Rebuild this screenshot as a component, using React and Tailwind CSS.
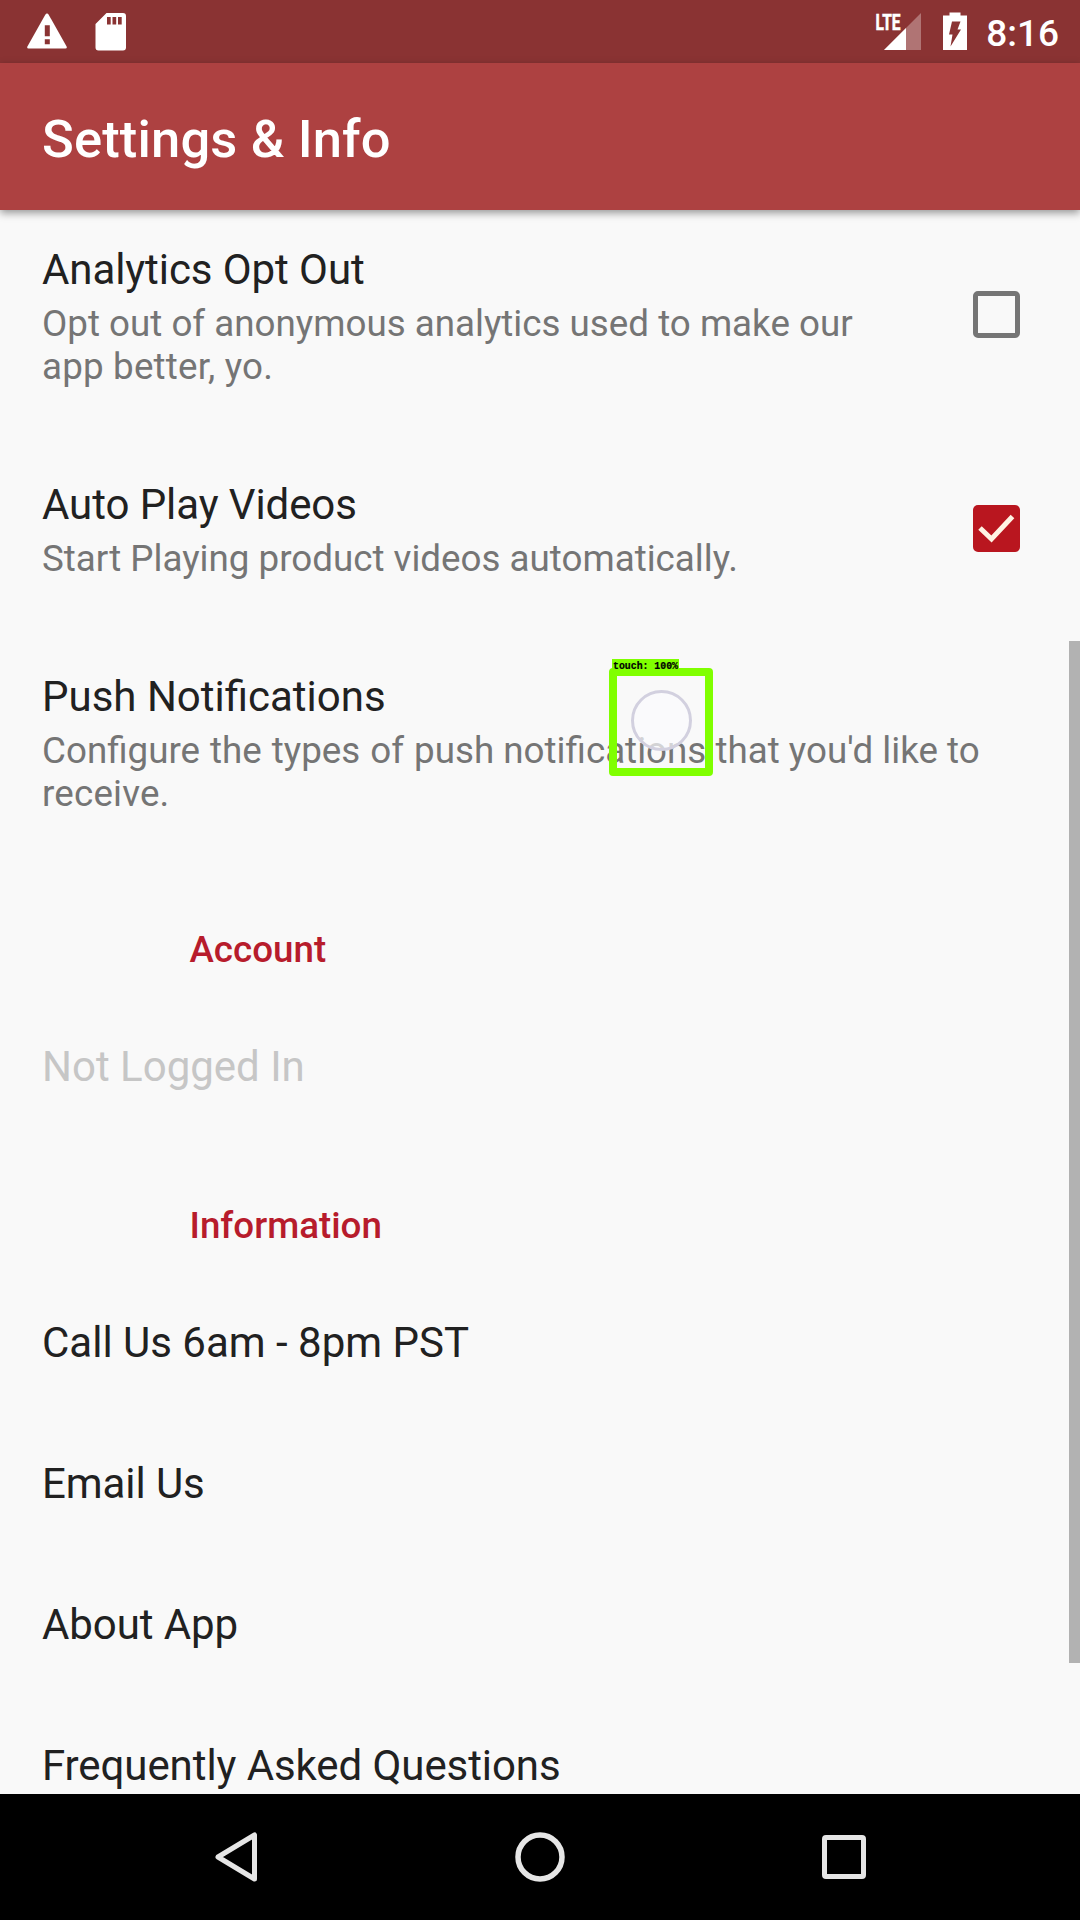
function Row({ title, lines = [], first, muted, tight, children }) {
  return (
    <div className={(first ? "pt-[35px]" : "pt-[46px]") + " flex shrink-0 items-center justify-between pr-[60.5px] pb-[46px] pl-[42px]"}>
      <div>
        <div className={(muted ? "text-[#c6c6c6]" : "text-[#212121]") + (tight ? " tracking-[-0.08px]" : "") + " whitespace-nowrap text-[42px] leading-[49px]"}>{title}</div>
        {lines.length > 0 && (
          <div className="mt-2 text-[36.75px] leading-[43px] text-[#757575]">
            {lines.map((l, i) => (
              <div key={i} className={(i > 0 ? "tracking-[0.18px] " : "") + "whitespace-nowrap"}>{l}</div>
            ))}
          </div>
        )}
      </div>
      {children}
    </div>
  );
}

function Header({ children }) {
  return (
    <div className="flex h-[134.5px] shrink-0 items-end pb-[24.5px] pl-[189.5px] text-[36.75px] leading-[43px] font-medium text-[#b71c2c]">
      {children}
    </div>
  );
}

export default function App() {
  return (
    <div className="relative flex h-[1920px] w-[1080px] flex-col overflow-hidden bg-[#f9f9f9] font-['Roboto',sans-serif]">
      <div className="flex h-[63px] shrink-0 items-center justify-between bg-[#8a3333] pr-[21px] pl-[27px]">
        <div className="flex items-center gap-7">
          <svg className="h-[37px] w-10" viewBox="0 0 40 37">
            <path d="M20 0.5q1 0 1.7 1.2L39.6 33.5q.8 2-1.2 2H1.6q-2 0-1.2-2L18.3 1.7Q19 .5 20 .5z" fill="#fff" />
            <path d="M17.8 12.3h5v11h-5zM17.8 26.300h5v5h-5z" fill="#8a3333" />
          </svg>
          <svg className="h-[39px] w-[31px]" viewBox="0 0 31 39">
            <path d="M11.500 1H28a3 3 0 0 1 3 3v31.500a3 3 0 0 1-3 3H3.500a3 3 0 0 1-3-3V12z" fill="#fff" />
            <path d="M12 5h3.700v7.500H12zM17.500 5h3.700v7.500h-3.700zM23 5h3.700v7.500H23z" fill="#8a3333" />
          </svg>
        </div>
        <div className="flex items-center">
          <svg className="h-10 w-[46px] overflow-visible" viewBox="0 0 46 40">
            <path d="M46 1v37H9z" fill="#b07474" />
            <path d="M31 16v22H9z" fill="#fff" />
            <text x="0.500" y="18" fontFamily="Roboto" fontWeight="700" fontSize="22.500" textLength="25" lengthAdjust="spacingAndGlyphs" fill="#fff" stroke="#fff" strokeWidth="0.600">LTE</text>
          </svg>
          <svg className="ml-[22px] h-10 w-6" viewBox="0 0 24 40">
            <path d="M6.500 0.500h11v3H24V38H0V3.500h6.500z" fill="#fff" />
            <path d="M9 9.500h8.500l-3 8H18L7.500 34.500l2-12H6z" fill="#8a3333" />
          </svg>
          <span className="ml-[19px] pt-[3px] text-[37px] leading-[43px] font-medium text-white">8:16</span>
        </div>
      </div>
      <div className="z-10 flex h-[147px] shrink-0 items-center bg-[#ad4141] pl-[42px] shadow-[0_3px_8px_rgba(0,0,0,0.4)]">
        <h1 className="pt-1 text-[52.5px] leading-[62px] font-medium tracking-[0.15px] text-white">Settings &amp; Info</h1>
      </div>
      <main className="flex min-h-0 flex-1 flex-col overflow-hidden">
        <Row first tight title="Analytics Opt Out" lines={["Opt out of anonymous analytics used to make our", "app better, yo."]}>
          <span className="mb-[5px] size-[47px] rounded-[5px] border-[5px] border-[#757575]" />
        </Row>
        <Row title="Auto Play Videos" tight lines={["Start Playing product videos automatically."]}>
          <span className="mb-1 size-[47px] rounded-[5px] bg-[#b9161f]">
            <svg viewBox="0 0 47 47" className="size-[47px]">
              <path d="M7 23l11.500 11L39.500 11.500" fill="none" stroke="#fff3e3" strokeWidth="5" />
            </svg>
          </span>
        </Row>
        <Row
          title="Push Notifications"
          lines={[
            <>
              <span className="[word-spacing:0.9px]">Configure the types of </span>
              {"push notifications that you'd like to"}
            </>,
            "receive.",
          ]}
        />
        <Header>Account</Header>
        <Row title="Not Logged In" muted />
        <Header>Information</Header>
        <div className="flex flex-col pt-px">
          <Row title="Call Us 6am - 8pm PST" />
          <Row title="Email Us" tight />
          <Row title="About App" tight />
          <Row title="Frequently Asked Questions" tight />
        </div>
      </main>
      <nav className="z-10 flex h-[126px] shrink-0 items-center justify-between bg-black pr-[214px] pl-[215px]">
        <svg className="h-[50px] w-[42px]" viewBox="0 0 42 50">
          <path d="M39.500 3v44L3 25z" fill="none" stroke="#e6e6e6" strokeWidth="5" strokeLinejoin="round" />
        </svg>
        <svg className="ml-[1px] size-[50px]" viewBox="0 0 50 50">
          <circle cx="25" cy="25" r="22" fill="none" stroke="#e6e6e6" strokeWidth="5.500" />
        </svg>
        <svg className="size-[44px]" viewBox="0 0 44 44">
          <rect x="2.500" y="2.500" width="39" height="39" rx="1.500" fill="none" stroke="#e6e6e6" strokeWidth="5" />
        </svg>
      </nav>
      <div className="absolute top-[641px] right-0 h-[1022px] w-[11px] bg-[#b2b2b2]" />
      <div className="absolute top-[690px] left-[631px] size-[61px] rounded-full border-[3px] border-[#d2d0df] bg-[#fbfbfd]/70" />
      <div className="absolute top-[668px] left-[609px] h-[108px] w-[104px] rounded-[4px] border-8 border-[#80ff00]" />
      <div className="absolute top-[659px] left-[612px] h-[13px] w-[67px] bg-[#80ff00]">
        <svg className="block h-[13px] w-[67px] overflow-visible" viewBox="0 0 67 13">
          <text x="1" y="9.500" fontFamily="Liberation Mono" fontWeight="700" fontSize="10" textLength="65" lengthAdjust="spacingAndGlyphs" fill="#000" stroke="#000" strokeWidth="0.200">touch: 100%</text>
        </svg>
      </div>
    </div>
  );
}
